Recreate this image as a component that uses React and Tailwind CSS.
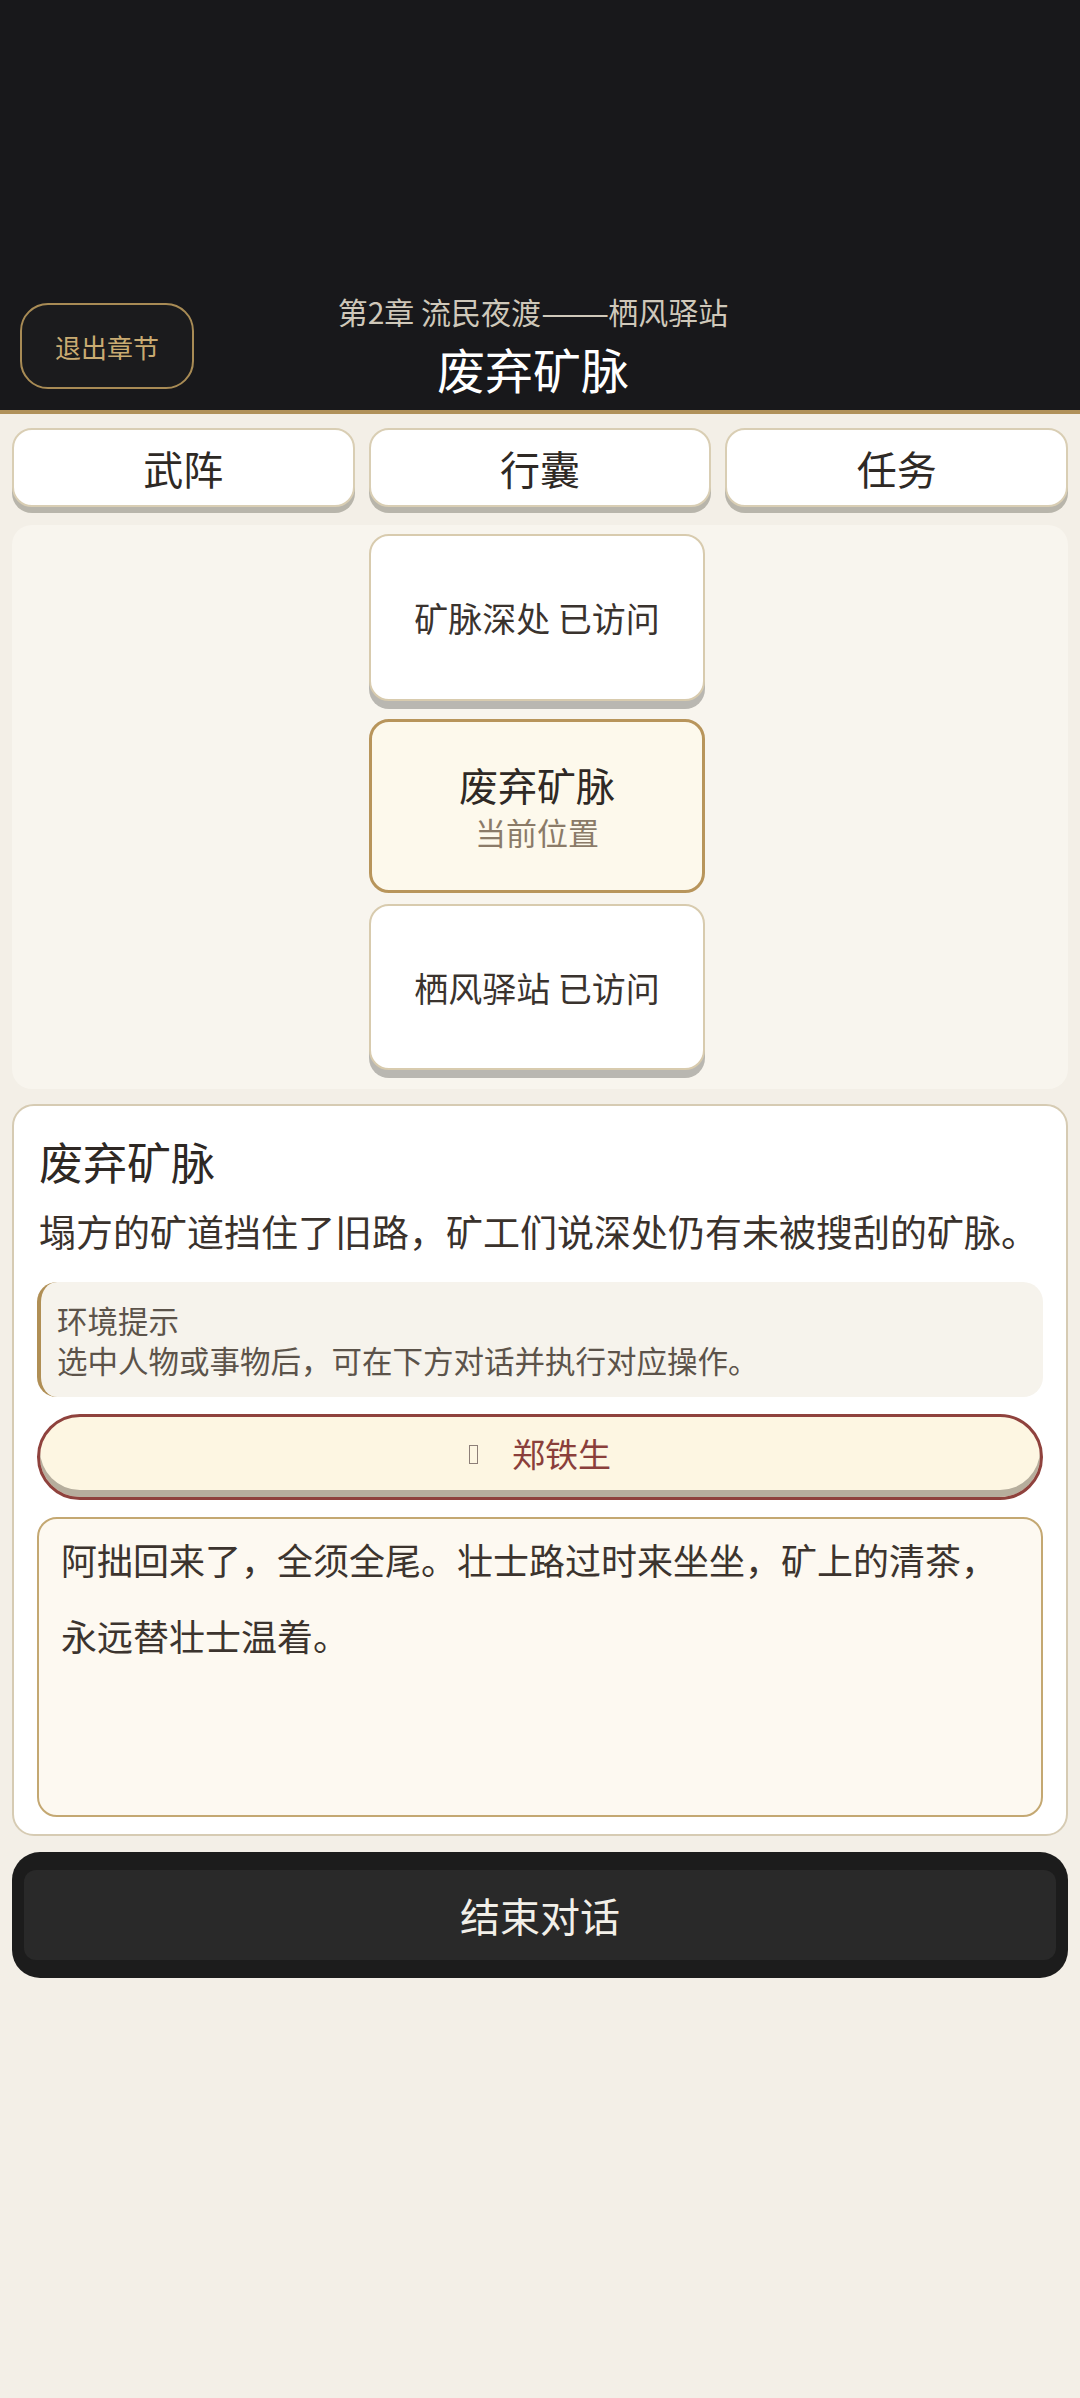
export default function App() {
  return (
    <div className="min-h-[2398px] w-[1080px] bg-[#f3efe7] font-['Noto_Sans_CJK_SC','Noto_Sans',sans-serif]">
      {/* Header */}
      <div className="flex h-[410px] flex-col justify-end bg-[#18181b] px-[20px] pb-[10px]">
        <div className="grid grid-cols-[1fr_auto_1fr] items-center">
          <div className="flex">
            <div className="flex h-[86px] w-[174px] items-center justify-center rounded-[28px] border-2 border-[#a88b55] bg-[#1b1b1d] text-[26px] text-[#c9ab72]">
              退出章节
            </div>
          </div>
          <div className="mr-[14px] flex flex-col items-center">
            <div className="whitespace-nowrap text-[30px] leading-[38px] text-[#cfc8ba]">
              第2章 流民夜渡<span className="mr-[17px] inline-block origin-left scale-x-[1.36]">——</span>栖风驿站
            </div>
            <div className="mt-[6px] text-[48px] leading-[64px] text-white">废弃矿脉</div>
          </div>
          <div />
        </div>
      </div>
      <div className="h-[4px] bg-[#b0915a]" />

      <div className="px-[12px] pt-[14px]">
        {/* Tabs */}
        <div className="grid grid-cols-3 gap-[14px]">
          {["武阵", "行囊", "任务"].map((t) => (
            <div
              key={t}
              className="flex h-[79px] items-center justify-center rounded-[20px] border-2 border-[#d9ceb4] bg-white text-[40px] text-[#2e2925] shadow-[0_6px_0_#b8b5ab]"
            >
              {t}
            </div>
          ))}
        </div>

        {/* Map panel */}
        <div className="mt-[18px] flex flex-col items-center rounded-[20px] bg-[#f8f5ee] pb-[19px] pr-[6px] pt-[9px]">
          <div className="flex h-[167px] w-[336px] items-center justify-center rounded-[20px] border-2 border-[#d8cbae] bg-white text-[34px] text-[#3a332e] shadow-[0_8px_0_#b9b7b1]">
            矿脉深处 已访问
          </div>
          <div className="mt-[18px] flex h-[174px] w-[336px] flex-col items-center justify-center rounded-[20px] border-[3px] border-[#b8955b] bg-[#fdf9ec]">
            <div className="text-[39px] leading-[52px] text-[#2f2925]">废弃矿脉</div>
            <div className="text-[31px] leading-[44px] text-[#8b7b68]">当前位置</div>
          </div>
          <div className="mt-[11px] flex h-[166px] w-[336px] items-center justify-center rounded-[20px] border-2 border-[#d8cbae] bg-white text-[34px] text-[#3a332e] shadow-[0_8px_0_#b9b7b1]">
            栖风驿站 已访问
          </div>
        </div>

        {/* Info card */}
        <div className="mt-[15px] rounded-[22px] border-2 border-[#d6cbb3] bg-white px-[23px] pb-[17px] pt-[25px]">
          <div className="pl-[2px] text-[44px] leading-[60px] text-[#2e2824]">废弃矿脉</div>
          <div className="mt-[15px] pl-[2px] text-[37px] leading-[50px] text-[#3a322c]">
            塌方的矿道挡住了旧路，矿工们说深处仍有未被搜刮的矿脉。
          </div>
          <div className="mt-[26px] rounded-[20px] border-l-4 border-[#b08f55] bg-[#f6f3ec] pb-[17px] pl-[16px] pt-[18px] text-[30.5px] leading-[40px] text-[#5c534a]">
            <div>环境提示</div>
            <div>选中人物或事物后，可在下方对话并执行对应操作。</div>
          </div>
          <div className="mt-[17px] flex h-[86px] items-center justify-center gap-[34px] rounded-full border-[3px] border-[#8f423d] bg-[#fdf6e2] pb-[6px] shadow-[inset_0_-7px_0_#b6ae9d]">
            <span className="inline-block h-[19px] w-[9px] border-[1.5px] border-[#8d7f78]" />
            <span className="text-[33px] text-[#8a3f3b]">郑铁生</span>
          </div>
          <div className="mt-[17px] h-[300px] rounded-[20px] border-2 border-[#c4a872] bg-[#fdf9f1] px-[22px] pt-[2px] text-[36px] leading-[76px] text-[#3c342e]">
            阿拙回来了，全须全尾。壮士路过时来坐坐，矿上的清茶，永远替壮士温着。
          </div>
        </div>

        {/* End button */}
        <div className="mt-[16px] rounded-[28px] bg-[#1c1c1c] px-[12px] py-[18px]">
          <div className="flex h-[90px] items-center justify-center rounded-[12px] bg-[#292929] text-[40px] text-[#f2efe8]">
            结束对话
          </div>
        </div>
      </div>
    </div>
  );
}
